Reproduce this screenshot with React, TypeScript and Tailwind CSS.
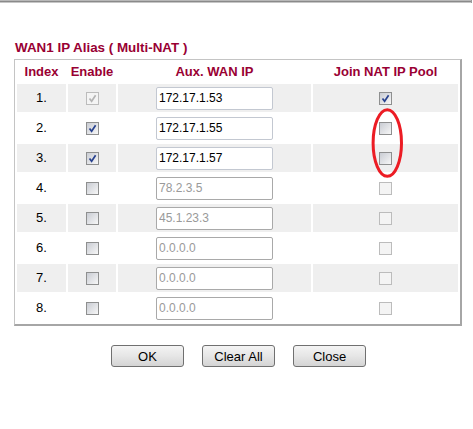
import React from 'react';

type BoxKind = 'checked' | 'unchecked' | 'dimChecked' | 'dimUnchecked';

interface AliasRow {
  ip: string;
  active: boolean;
  enable: BoxKind;
  join: BoxKind;
}

const rows: AliasRow[] = [
  { ip: '172.17.1.53', active: true, enable: 'dimChecked', join: 'checked' },
  { ip: '172.17.1.55', active: true, enable: 'checked', join: 'unchecked' },
  { ip: '172.17.1.57', active: true, enable: 'checked', join: 'unchecked' },
  { ip: '78.2.3.5', active: false, enable: 'unchecked', join: 'dimUnchecked' },
  { ip: '45.1.23.3', active: false, enable: 'unchecked', join: 'dimUnchecked' },
  { ip: '0.0.0.0', active: false, enable: 'unchecked', join: 'dimUnchecked' },
  { ip: '0.0.0.0', active: false, enable: 'unchecked', join: 'dimUnchecked' },
  { ip: '0.0.0.0', active: false, enable: 'unchecked', join: 'dimUnchecked' },
];

const Box: React.FC<{ kind: BoxKind }> = ({ kind }) => {
  const dim = kind === 'dimChecked' || kind === 'dimUnchecked';
  const ticked = kind === 'checked' || kind === 'dimChecked';
  return (
    <span
      className={
        dim
          ? 'inline-flex w-[13px] h-[13px] border border-[#bcbcbc] bg-[#f4f4f4] align-middle'
          : 'inline-flex w-[13px] h-[13px] border border-[#8e8f8f] bg-linear-to-br from-[#c9ccd3] to-[#f7f7f7] align-middle'
      }
    >
      {ticked && (
        <svg width="11" height="11" viewBox="0 0 11 11" className="block">
          <path
            d="M2.5 5.5 L4.6 8.2 L8.6 2.2"
            fill="none"
            stroke={dim ? '#b4b4b4' : '#27418e'}
            strokeWidth="1.7"
          />
        </svg>
      )}
    </span>
  );
};

const Btn: React.FC<{ label: string }> = ({ label }) => (
  <button className="w-[73px] h-[22px] border border-[#707070] rounded-[3px] bg-linear-to-b from-[#f4f4f4] via-[#e6e6e6] to-[#d4d4d4] text-[13px] text-black leading-none">
    {label}
  </button>
);

export default function App() {
  return (
    <div className="relative w-[473px] h-[429px] bg-white font-['Liberation_Sans',Arial,sans-serif]">
      <div className="w-[472px] border-r border-[#9a9a9a]">
        <div className="h-px bg-[#b8b8b8]" />
        <div className="h-px bg-[#8a8a8a]" />
        <div className="h-px bg-[#c6c6c6]" />
      </div>

      <h2 className="mt-[37px] ml-[15px] text-[13.4px] leading-[15px] font-bold text-[#990033]">
        WAN1 IP Alias ( Multi-NAT )
      </h2>

      <div className="mt-[4px] ml-[14px] w-fit border-l border-t border-[#c4c4c4] border-r-2 border-b-2 border-r-[#a6a6a6] border-b-[#a6a6a6]">
        <table className="border-separate border-spacing-[2px] text-[13px]">
          <thead>
            <tr className="h-[20px] text-[#990033] font-bold">
              <th className="w-[49px] p-0 font-bold">Index</th>
              <th className="w-[48px] p-0 font-bold">Enable</th>
              <th className="w-[193px] p-0 font-bold">Aux. WAN IP</th>
              <th className="w-[145px] p-0 font-bold">Join NAT IP Pool</th>
            </tr>
          </thead>
          <tbody>
            {rows.map((r, i) => {
              const bg = i % 2 === 0 ? 'bg-[#efefef]' : 'bg-white';
              return (
                <tr key={i} className="h-[28px]">
                  <td className={`${bg} p-0 text-center text-black`}>{i + 1}.</td>
                  <td className={`${bg} p-0 text-center`}>
                    <Box kind={r.enable} />
                  </td>
                  <td className={`${bg} p-0`}>
                    <div className="flex justify-center">
                      <input
                        readOnly
                        value={r.ip}
                        className={
                          r.active
                            ? 'w-[117px] h-[23px] pl-[2px] border border-[#c3c8d1] rounded-[2px] bg-white text-[12px] text-black outline-none'
                            : 'w-[117px] h-[23px] pl-[2px] border border-[#a9a9a9] rounded-[2px] bg-white text-[12px] text-[#9a9a9a] outline-none'
                        }
                      />
                    </div>
                  </td>
                  <td className={`${bg} p-0 text-center`}>
                    <Box kind={r.join} />
                  </td>
                </tr>
              );
            })}
          </tbody>
        </table>
      </div>

      <div className="mt-[19px] ml-[14px] w-[449px] flex justify-center gap-[18px]">
        <Btn label="OK" />
        <Btn label="Clear All" />
        <Btn label="Close" />
      </div>

      {/* red highlight round the two join boxes */}
      <svg
        className="absolute left-[371px] top-[108px]"
        width="33"
        height="71"
        viewBox="0 0 33 71"
      >
        <ellipse cx="16.3" cy="35" rx="14.2" ry="33.3" fill="none" stroke="#ec1c24" strokeWidth="3" />
      </svg>
    </div>
  );
}
